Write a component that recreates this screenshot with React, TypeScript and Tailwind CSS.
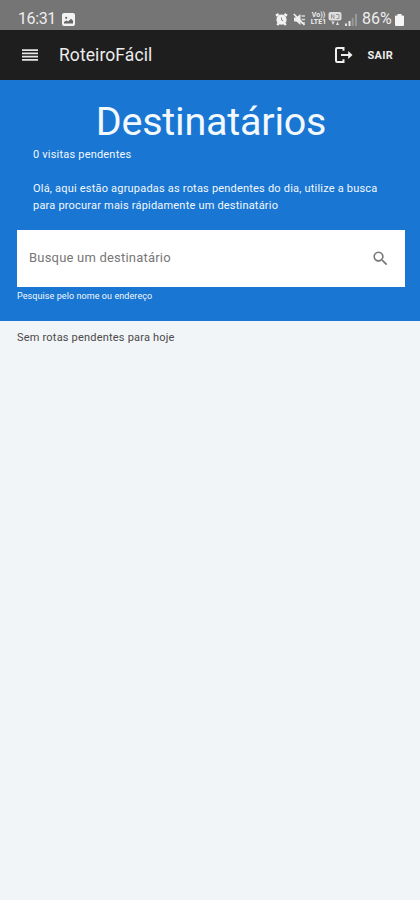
import { MdSearch } from 'react-icons/md';

const PhotoIcon = () => (
  <svg viewBox="0 0 13 13" className="w-[13px] h-[13px]" aria-hidden="true">
    <rect width="13" height="13" rx="2" fill="#f2f2f2" />
    <circle cx="4.2" cy="4.8" r="1.1" fill="#666" />
    <path d="M2 10.5V9l2.3-1.6 1.8 1.2L9 5.7l2 2v2.8z" fill="#666" />
  </svg>
);

const AlarmIcon = () => (
  <svg viewBox="0 0 13 13" className="w-[13px] h-[13px]" aria-hidden="true">
    <path d="M1 2.8 3.6 1M12 2.8 9.4 1M2.2 12l1.6-1.6M10.8 12 9.2 10.4" stroke="#f2f2f2" strokeWidth="2.4" />
    <circle cx="6.5" cy="6.7" r="5.1" fill="#f2f2f2" />
    <path d="M6.5 4.5v2.5l1.7.8" fill="none" stroke="#858585" strokeWidth="1" />
  </svg>
);

const MuteIcon = () => (
  <svg viewBox="0 0 13 13" className="w-[13px] h-[13px]" aria-hidden="true">
    <path d="M1 4.5h2.4L7.5 1v11L3.4 8.6H1z" fill="#ededed" />
    <path d="M8.5 3H12M8.5 6.5H12M8.5 10H12" stroke="#d6d6d6" strokeWidth="1.5" />
    <path d="m.8 1 10.7 11" stroke="#f2f2f2" strokeWidth="1.6" />
  </svg>
);

const NetworkIcon = () => (
  <svg viewBox="0 0 14 14" className="w-[14px] h-[14px]" aria-hidden="true">
    <rect x=".5" y="0" width="13" height="8.5" rx="2" fill="#dedede" />
    <path d="M3.5 6.5v-4l2.5 4v-4M8 2.5h3v4H8.5" fill="none" stroke="#999" strokeWidth="1" />
    <path d="M3.5 9.5h3L5 13zM8 13h3L9.5 9.5z" fill="#e2e2e2" />
  </svg>
);

const SignalIcon = () => (
  <svg viewBox="0 0 12 13" className="w-[12px] h-[13px]" aria-hidden="true">
    <path d="M0 10.5h2V13H0zM3.5 8h2v5h-2z" fill="#e4e4e4" />
    <path d="M6.7 5h2v8h-2zM10 1h2v12h-2z" fill="#999" />
  </svg>
);

const BatteryIcon = () => (
  <svg viewBox="0 0 9 13" className="w-[9px] h-[13px]" aria-hidden="true">
    <path d="M2.5 1h4v1.5H8a1 1 0 0 1 1 1V12a1 1 0 0 1-1 1H1a1 1 0 0 1-1-1V3.5a1 1 0 0 1 1-1h1.5z" fill="#f5f5f5" />
  </svg>
);

const MenuIcon = () => (
  <svg viewBox="0 0 16 12" className="h-3 w-4" stroke="#e6e6e6" strokeWidth="1.8" aria-hidden="true">
    <path d="M0 1.2h16M0 4.4h16M0 7.6h16M0 10.8h16" />
  </svg>
);

const LogoutIcon = () => (
  <svg viewBox="0 0 18 16" className="w-[18px] h-[16px]" fill="none" stroke="#f0f0f0" strokeWidth="2" aria-hidden="true">
    <path d="M8.5 3.8V1H2.2Q1 1 1 2.2v11.6Q1 15 2.2 15h6.3v-2.8" />
    <path d="M6 8h9" />
    <path d="m13.2 4 4.3 4-4.3 4z" fill="#f0f0f0" stroke="none" />
  </svg>
);

function StatusBar() {
  return (
    <div className="flex h-[30px] items-center bg-[#757575] pl-[18px] pr-[16px] pt-[8px] text-[#ededed]">
      <span className="w-[44px] whitespace-nowrap text-[16px] leading-none tracking-[-0.4px]">16:31</span>
      <PhotoIcon />
      <div className="ml-auto flex items-center">
        <AlarmIcon />
        <div className="ml-[5px]"><MuteIcon /></div>
        <div className="ml-[4px] w-[17px] text-center text-[7px] font-bold leading-[7px]">
          <div>Vo))</div>
          <div className="whitespace-nowrap">LTE1</div>
        </div>
        <div className="ml-[1px]"><NetworkIcon /></div>
        <div className="ml-[3px]"><SignalIcon /></div>
        <span className="ml-[5px] w-[33px] whitespace-nowrap text-[16px] leading-none">86%</span>
        <BatteryIcon />
      </div>
    </div>
  );
}

function AppBar() {
  return (
    <header className="flex h-[50px] items-center bg-[#1e1e1e] pl-[22px] pr-[27px] text-[#ececec]">
      <button aria-label="Menu">
        <MenuIcon />
      </button>
      <h1 className="ml-[21px] pt-0.5 text-[17.5px] leading-none tracking-[0.08px]">RoteiroFácil</h1>
      <button className="ml-auto flex items-center gap-[15px]">
        <LogoutIcon />
        <span className="text-[11px] font-bold leading-none tracking-[0.25px]">SAIR</span>
      </button>
    </header>
  );
}

export default function App() {
  return (
    <div className="min-h-[900px] w-full bg-[#f2f5f7] font-['Roboto',sans-serif]">
      <StatusBar />
      <AppBar />

      <section className="h-[241px] bg-[#1976d2] px-4 pt-[17px] text-[#f3f8fd]">
        <h2 className="pl-0.5 text-center text-[39.5px] leading-[49px] tracking-[-0.22px]">Destinatários</h2>
        <div className="px-[17px] text-[11px] leading-[17px] tracking-[0.2px]">
          <p>0 visitas pendentes</p>
          <p className="mt-[17px] whitespace-nowrap">
            Olá, aqui estão agrupadas as rotas pendentes do dia, utilize a busca
            <br />
            para procurar mais rápidamente um destinatário
          </p>
        </div>

        {/* Search field */}
        <div className="ml-px mt-4 flex h-[57px] w-[388px] items-center justify-between bg-white pl-3 pr-[15px] text-[#777]">
          <span className="pb-[3px] text-[13px] leading-none tracking-[0.2px]">Busque um destinatário</span>
          <MdSearch className="h-[19px] w-[19px]" />
        </div>
        <p className="ml-px mt-[3px] text-[9px] leading-[12px] tracking-[0.08px]">Pesquise pelo nome ou endereço</p>
      </section>

      <p className="ml-[17px] mt-[9px] text-[11px] leading-4 tracking-[0.2px] text-[#4a4a4a]">Sem rotas pendentes para hoje</p>
    </div>
  );
}
